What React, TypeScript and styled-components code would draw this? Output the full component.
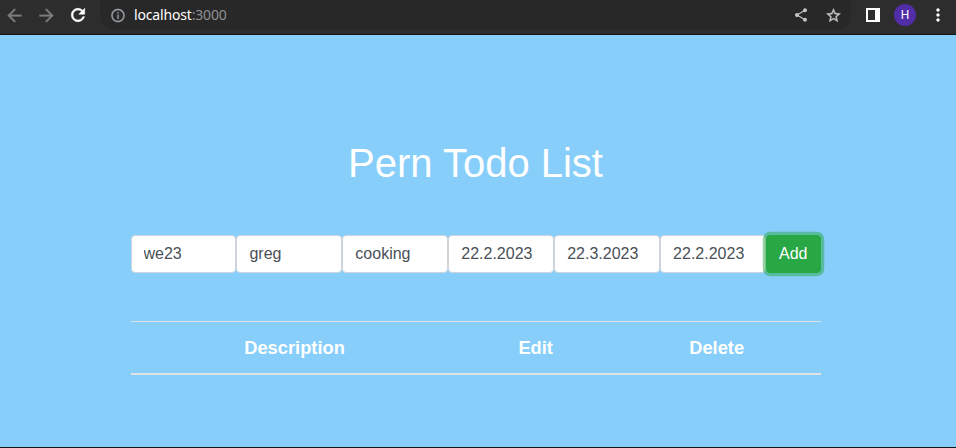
import React from "react";
import styled, { createGlobalStyle } from "styled-components";
import { MdArrowBack, MdArrowForward, MdRefresh, MdInfoOutline, MdShare, MdStarBorder, MdMoreVert } from "react-icons/md";

const GlobalStyle = createGlobalStyle`
  *, *::before, *::after { box-sizing: border-box; }
  body { margin: 0; background: #87cefa; font-family: "Liberation Sans", Arial, sans-serif; font-size: 16px; line-height: 1.5; }
`;

const Window = styled.div`
  display: flex;
  flex-direction: column;
  height: 448px;
  overflow: hidden;
`;

const Toolbar = styled.header`
  display: flex;
  align-items: flex-start;
  height: 35px;
  flex: none;
  background: #2d2d2d;
  border-bottom: 1px solid #141414;
`;

const IconSlot = styled.span<{ $width: number; $color: string; $weight?: number }>`
  display: flex;
  align-items: center;
  justify-content: center;
  width: ${(p) => p.$width}px;
  height: 30px;
  flex: none;
  color: ${(p) => p.$color};

  svg {
    stroke-width: ${(p) => p.$weight ?? 0};
  }

  path[fill="none"] {
    stroke: none;
  }
`;

const Navigation = styled.nav`
  display: flex;
  flex: none;
  width: 102px;
  margin-left: -2px;
`;

const AddressBar = styled.div`
  display: flex;
  align-items: center;
  flex: none;
  width: 751px;
  height: 30px;
  padding: 0 2px 0 10px;
  background: #282828;
  border-radius: 0 0 15px 15px;
`;

const Address = styled.span`
  flex: 1;
  padding-left: 8px;
  font: 14px/30px "Noto Sans", "Open Sans", sans-serif;
  letter-spacing: -0.17px;
  color: #8d9094;
`;

const Host = styled.span`
  color: #fff;
`;

const Avatar = styled.span`
  display: flex;
  align-items: center;
  justify-content: center;
  flex: none;
  width: 22px;
  height: 22px;
  border-radius: 50%;
  background: #512da8;
  color: #fff;
  font: 12px/22px Roboto, sans-serif;
`;

const Page = styled.main`
  flex: 1;
  background: #87cefa;
  border-bottom: 1px solid #10151a;
`;

const Container = styled.div`
  width: 690px;
  margin-left: 130.5px;
  padding-top: 104px;
`;

const Title = styled.h1`
  margin: 0;
  font-size: 40px;
  font-weight: 400;
  line-height: 48px;
  text-align: center;
  color: #fff;
`;

const TodoForm = styled.form`
  display: flex;
  margin-top: 48px;
`;

const Field = styled.input`
  flex: 1 1 0;
  min-width: 0;
  height: 38px;
  padding: 6px 12px;
  border: 1px solid #ced4da;
  border-radius: 4px;
  background: #fff;
  color: #495057;
  font: inherit;
`;

const AddButton = styled.button`
  position: relative;
  height: 38px;
  padding: 6px 12px;
  border: 1px solid #28a745;
  border-radius: 4px;
  background: #28a745;
  box-shadow: 0 0 0 3.2px rgba(40, 167, 69, 0.5);
  color: #fff;
  font: inherit;
`;

const TodoTable = styled.table`
  width: 100%;
  margin-top: 48px;
  border-collapse: collapse;
  color: #fff;
  font-size: 18.3px;
  line-height: 27px;
  text-align: center;
`;

const HeadCell = styled.th`
  padding: 12px;
  border-top: 1px solid #dee2e6;
  border-bottom: 2px solid #dee2e6;
`;

const values = ["we23", "greg", "cooking", "22.2.2023", "22.3.2023", "22.2.2023"];
const columns = ["Description", "Edit", "Delete"];

export default function App() {
  return (
    <Window>
      <GlobalStyle />
      <Toolbar>
        <Navigation>
          <IconSlot $width={32} $color="#7d7d7d" $weight={0.3}><MdArrowBack size={21} /></IconSlot>
          <IconSlot $width={32} $color="#7d7d7d" $weight={0.3}><MdArrowForward size={21} /></IconSlot>
          <IconSlot $width={32} $color="#ffffff" $weight={0.7}><MdRefresh size={20} /></IconSlot>
        </Navigation>
        <AddressBar>
          <IconSlot $width={16} $color="#9aa0a6" $weight={0.3}><MdInfoOutline size={17} /></IconSlot>
          <Address><Host>localhost</Host>:3000</Address>
          <IconSlot $width={32} $color="#c4c4c4"><MdShare size={16} /></IconSlot>
          <IconSlot $width={32} $color="#c4c4c4" $weight={0.5}><MdStarBorder size={17} /></IconSlot>
        </AddressBar>
        <IconSlot $width={44} $color="#ffffff">
          <svg width="14" height="14" viewBox="0 0 14 14"><path fill="currentColor" fillRule="evenodd" d="M0 0h14v14H0zM2 2v10h7V2z" /></svg>
        </IconSlot>
        <IconSlot $width={20} $color="#ffffff"><Avatar>H</Avatar></IconSlot>
        <IconSlot $width={45} $color="#ffffff"><MdMoreVert size={20} /></IconSlot>
      </Toolbar>
      <Page>
        <Container>
          <Title>Pern Todo List</Title>
          <TodoForm onSubmit={(e) => e.preventDefault()}>
            {values.map((value, i) => <Field key={i} type="text" defaultValue={value} />)}
            <AddButton>Add</AddButton>
          </TodoForm>
          <TodoTable>
            <thead>
              <tr>{columns.map((name) => <HeadCell key={name}>{name}</HeadCell>)}</tr>
            </thead>
          </TodoTable>
        </Container>
      </Page>
    </Window>
  );
}
